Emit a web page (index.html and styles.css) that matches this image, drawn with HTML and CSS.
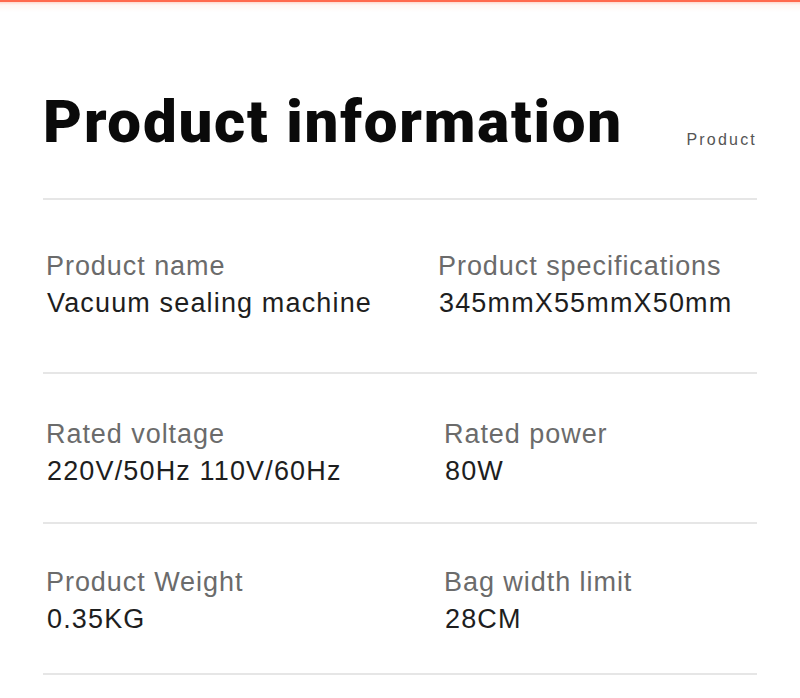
FILE: index.html
```html
<!DOCTYPE html>
<html lang="en">
<head>
<meta charset="utf-8">
<title>Product information</title>
<link rel="stylesheet" href="styles.css">
</head>
<body>
<div class="topbar"></div>
<main class="page">
  <header class="head">
    <h1 class="title">Product information</h1>
    <span class="tag">Product</span>
  </header>
  <section class="row row-1">
    <div class="cell">
      <div class="label">Product name</div>
      <div class="value">Vacuum sealing machine</div>
    </div>
    <div class="cell">
      <div class="label">Product specifications</div>
      <div class="value">345mmX55mmX50mm</div>
    </div>
  </section>
  <section class="row row-2">
    <div class="cell">
      <div class="label">Rated voltage</div>
      <div class="value">220V/50Hz 110V/60Hz</div>
    </div>
    <div class="cell">
      <div class="label">Rated power</div>
      <div class="value">80W</div>
    </div>
  </section>
  <section class="row row-3">
    <div class="cell">
      <div class="label">Product Weight</div>
      <div class="value">0.35KG</div>
    </div>
    <div class="cell">
      <div class="label">Bag width limit</div>
      <div class="value">28CM</div>
    </div>
  </section>
</main>
</body>
</html>
```
FILE: styles.css
```css
* { box-sizing: border-box; }
html, body { margin: 0; padding: 0; background: #fff; }
body { font-family: "Liberation Sans", Arial, sans-serif; }

.topbar {
  height: 12px;
  background: linear-gradient(to bottom, #ff6a4e 0, #ff6a4e 2px, #ffd9cf 2px, #fff6f3 5px, #ffffff 12px);
}

.page {
  padding: 0 43px;
}

.head {
  display: flex;
  justify-content: space-between;
  align-items: flex-end;
  margin-top: 80px;
  padding-bottom: 46px;
  border-bottom: 2px solid #e6e6e6;
}

.title {
  margin: 0;
  font-family: Roboto, "Liberation Sans", sans-serif;
  font-weight: 900;
  font-size: 60px;
  line-height: 60px;
  letter-spacing: 1.8px;
  color: #0a0a0a;
}

.tag {
  font-size: 16px;
  line-height: 16px;
  margin-bottom: 4px;
  letter-spacing: 2.2px;
  color: #555;
}

.row {
  display: grid;
  grid-template-columns: 395px 1fr;
  padding-left: 3px;
  border-bottom: 2px solid #e6e6e6;
}
.row-1 { padding-top: 48px; padding-bottom: 50px; grid-template-columns: 392px 1fr; }
.row-2 { padding-top: 42px; padding-bottom: 32px; grid-template-columns: 398px 1fr; }
.row-3 { padding-top: 40px; padding-bottom: 35px; grid-template-columns: 398px 1fr; }

.label, .value {
  font-size: 27px;
  line-height: 37px;
  white-space: nowrap;
}
.label { color: #6b6b6b; letter-spacing: 0.95px; }
.value { color: #1e1e1e; padding-left: 1px; letter-spacing: 1.15px; }
```
